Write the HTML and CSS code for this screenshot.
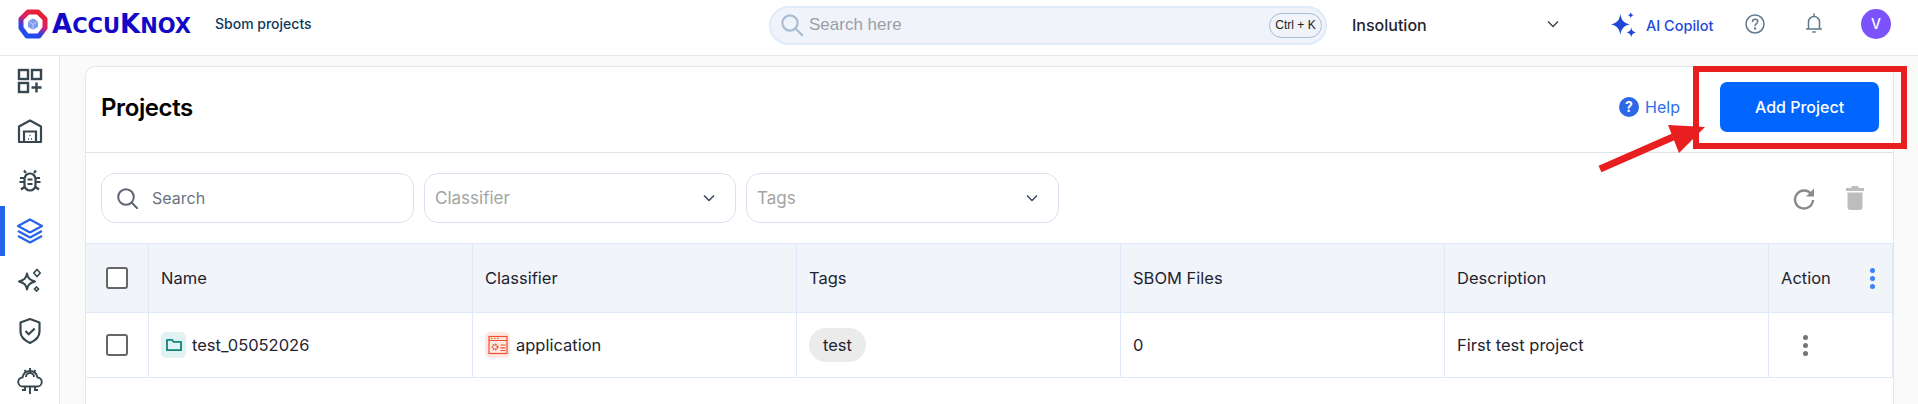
FILE: index.html
```html
<!DOCTYPE html>
<html lang="en">
<head>
<meta charset="utf-8">
<title>Projects</title>
<link rel="stylesheet" href="styles.css">
</head>
<body>
<header class="topbar">
  <div class="logo">
    <svg class="logo-mark" viewBox="0 0 30 30" width="30" height="30">
      <defs><linearGradient id="lg" x1="0.75" y1="0" x2="0.25" y2="1"><stop offset="0" stop-color="#e8202f"/><stop offset="0.45" stop-color="#d8206a"/><stop offset="0.7" stop-color="#3b3fe0"/><stop offset="1" stop-color="#1450f0"/></linearGradient></defs>
      <path d="M10 3h10l7 7v9l-6 8H9l-6-8v-9z" fill="none" stroke="url(#lg)" stroke-width="5" stroke-linejoin="round"/>
      <path d="M15 9.500l5 2.800v5.600l-5 2.800-5-2.800v-5.600z" fill="#7f9cf0"/>
      <path d="M15 15.200v5.500M10 12.300l5 2.900 5-2.900" fill="none" stroke="#fff" stroke-width=".5"/>
    </svg>
    <span class="logo-text">A<small>CCU</small>K<small>NOX</small></span>
  </div>
  <div class="page-name">Sbom projects</div>
  <div class="global-search">
    <svg width="24" height="24" viewBox="0 0 24 24" fill="none" stroke="#a9bdd3" stroke-width="2.200"><circle cx="10" cy="10" r="7.600"/><path d="M15.600 15.600l6.600 6.600" stroke-linecap="round"/></svg>
    <span class="global-placeholder">Search here</span>
    <kbd class="shortcut">Ctrl + K</kbd>
  </div>
  <div class="tenant">Insolution</div>
  <svg class="tenant-chev" width="12" height="8" viewBox="0 0 12 8" fill="none" stroke="#374151" stroke-width="1.400"><path d="M1 1.500l5 5 5-5"/></svg>
  <svg class="star" width="27" height="26" viewBox="0 0 26 25" fill="#1d49d6"><path d="M10 2c1 6 3 8.600 9 10-6 1.400-8 4-9 10-1-6-3-8.600-9-10 6-1.400 8-4 9-10z"/><path d="M20 0c.4 2 1 2.600 3 3-2 .4-2.600 1-3 3-.4-2-1-2.600-3-3 2-.4 2.600-1 3-3zM20.500 15c.6 3 1.500 4 4.500 4.700-3 .7-3.900 1.700-4.500 4.700-.6-3-1.500-4-4.500-4.700 3-.7 3.900-1.700 4.500-4.700z"/></svg>
  <span class="copilot">AI Copilot</span>
  <svg class="help-top" width="20" height="20" viewBox="0 0 20 20" fill="none" stroke="#5e7a8a" stroke-width="1.500"><circle cx="10" cy="10" r="9"/><path d="M7.500 7.600c0-3.200 5.300-3.200 5.300 0 0 2-2.700 2-2.700 4" stroke-linecap="round"/><circle cx="10.100" cy="14.600" r=".5" fill="#5e7a8a"/></svg>
  <svg class="bell" width="16" height="21" viewBox="0 0 16 21" fill="none" stroke="#5e7a8a" stroke-width="1.500"><path d="M2.500 15.500V9a5.500 5.500 0 0 1 11 0v6.500M.5 16h15M8 1v2" stroke-linecap="round"/><path d="M6.800 19h2.400" stroke-linecap="round"/></svg>
  <div class="avatar">V</div>
</header>

<div class="shell">
  <nav class="sidebar">
    <a class="nav-item"><svg width="26" height="26" viewBox="0 0 26 26" fill="none" stroke="#37474f" stroke-width="2.400"><rect x="2" y="2" width="9" height="9"/><rect x="15" y="2" width="9" height="9"/><rect x="2" y="15" width="9" height="9"/><path d="M14.500 19.500h10M19.500 14.500v10"/></svg></a>
    <a class="nav-item"><svg width="26" height="26" viewBox="0 0 26 26" fill="none" stroke="#37474f" stroke-width="2.200"><path d="M2 24V8.500L13 2.500l11 6V24z" stroke-linejoin="round"/><path d="M7 24V13.500h12V24"/><path d="M11 21h1M14 21h1M12.500 17.500h1" stroke-width="1.600"/></svg></a>
    <a class="nav-item"><svg width="24" height="24" viewBox="0 0 24 24" fill="none" stroke="#37474f" stroke-width="2.200"><rect x="6.500" y="4.500" width="11" height="17" rx="5.500"/><path d="M9.500 10.500h5M9.500 15h5M8 4l-2-2.500M16 4l2-2.500M6 9H2M18 9h4M6 13H1.500M18 13h4.500M6.500 18l-3.500 2.500M17.500 18l3.500 2.500"/></svg></a>
    <a class="nav-item active"><svg width="28" height="26" viewBox="0 0 28 26" fill="none" stroke="#2563eb" stroke-width="2.200" stroke-linejoin="round"><path d="M14 1.500l12 6.500-12 6.500L2 8z"/><path d="M2 13l12 6.500L26 13"/><path d="M2 18l12 6.500L26 18"/></svg></a>
    <a class="nav-item"><svg width="26" height="26" viewBox="0 0 26 26" fill="none" stroke="#37474f" stroke-width="2"><path d="M10 7c1 5 2.500 6.500 8 8-5.500 1.500-7 3-8 8-1-5-2.500-6.500-8-8 5.500-1.500 7-3 8-8z" transform="translate(0 -1.500)" stroke-linejoin="round"/><path d="M20 1.500l3.200 3.500-3.200 3.500-3.200-3.500zM19.500 19l2 2-2 2-2-2z" stroke-width="1.600"/></svg></a>
    <a class="nav-item"><svg width="24" height="28" viewBox="0 0 24 28" fill="none" stroke="#37474f" stroke-width="2.200"><path d="M12 2l9.500 3.500v9c0 5.500-4 9-9.500 11.500C6.500 23.500 2.500 20 2.500 14.500v-9z" stroke-linejoin="round"/><path d="M7.500 14l3.200 3.200 6-5.700"/></svg></a>
    <a class="nav-item"><svg width="26" height="29" viewBox="0 0 26 29" fill="none" stroke="#37474f" stroke-width="1.900"><path d="M6 19.500a4.500 4.500 0 0 1-.5-9c1-5 4.500-6.500 7.500-6.500s6.500 1.500 7.500 6.500a4.500 4.500 0 0 1-.5 9z" stroke-linejoin="round"/><path d="M13 19.500V27M8 19.500v3.500H5M18 19.500v3.500h3M9 10a4 4 0 0 1 8 0M13 1v3M7.500 3l2 2.500M18.500 3l-2 2.500"/></svg></a>
  </nav>

  <main class="main">
    <section class="card">
      <div class="card-head">
        <h1 class="title">Projects</h1>
        <svg class="help-icon" width="20" height="20" viewBox="0 0 20 20"><circle cx="10" cy="10" r="10" fill="#2d68e8"/><text x="10" y="14.500" text-anchor="middle" class="help-q">?</text></svg>
        <span class="help-link">Help</span>
        <button class="add-btn">Add Project</button>
      </div>

      <div class="filters">
        <label class="field field-search">
          <svg width="21" height="21" viewBox="0 0 21 21" fill="none" stroke="#5f6673" stroke-width="2"><circle cx="9" cy="9" r="7.800"/><path d="M14.800 14.800l5.400 5.400" stroke-linecap="round"/></svg>
          <span class="search-ph">Search</span>
        </label>
        <div class="field field-select field-classifier"><span class="select-ph">Classifier</span><svg width="12" height="8" viewBox="0 0 12 8" fill="none" stroke="#39435a" stroke-width="1.500"><path d="M1 1.500l5 5 5-5"/></svg></div>
        <div class="field field-select field-tags"><span class="select-ph">Tags</span><svg width="12" height="8" viewBox="0 0 12 8" fill="none" stroke="#39435a" stroke-width="1.500"><path d="M1 1.500l5 5 5-5"/></svg></div>
        <svg class="refresh" width="22" height="24" viewBox="0 0 22 24" fill="none" stroke="#8a8a8a" stroke-width="2.400"><path d="M18.500 8.500A9 9 0 1 0 20 14"/><path d="M21 2.500v8h-8z" fill="#8a8a8a" stroke="none"/></svg>
        <svg class="trash" width="18" height="24" viewBox="0 0 18 24" fill="#bdbdbd"><path d="M6 0h6l1 2h5v3H0V2h5z"/><path d="M1.500 6.500h15V21a3 3 0 0 1-3 3h-9a3 3 0 0 1-3-3z"/></svg>
      </div>

      <table class="grid">
        <colgroup><col class="c-check"><col class="c-wide"><col class="c-wide"><col class="c-wide"><col class="c-wide"><col class="c-wide"><col class="c-last"></colgroup>
        <thead>
          <tr>
            <th><span class="check"></span></th>
            <th>Name</th>
            <th>Classifier</th>
            <th>Tags</th>
            <th>SBOM Files</th>
            <th>Description</th>
            <th><div class="action-head">Action<span class="dots dots-blue"><i></i><i></i><i></i></span></div></th>
          </tr>
        </thead>
        <tbody>
          <tr>
            <td><span class="check"></span></td>
            <td><div class="with-icon"><span class="badge badge-teal"><svg width="16" height="14" viewBox="0 0 16 14" fill="none" stroke="#0f8577" stroke-width="1.800"><path d="M1 12.200V1.800h5l1.500 2H15v8.400z" stroke-linejoin="round"/></svg></span>test_05052026</div></td>
            <td><div class="with-icon"><span class="badge badge-orange"><svg width="20" height="20" viewBox="0 0 20 20" fill="none" stroke="#f0502a" stroke-width="1.200"><rect x="1" y="1.500" width="18" height="17"/><path d="M1 5.500h18M3 3.500h1.500M6 3.500h1.500M9 3.500h1.500M12.500 10h5M12.500 12.800h5M12.500 15.500h5"/><circle cx="7" cy="12" r="2.500" stroke-dasharray="1.500 .8" stroke-width="1.800"/></svg></span>application</div></td>
            <td><span class="chip">test</span></td>
            <td>0</td>
            <td>First test project</td>
            <td><span class="dots dots-gray"><i></i><i></i><i></i></span></td>
          </tr>
        </tbody>
      </table>
    </section>
  </main>
</div>

<div class="callout"></div>
<svg class="arrow" width="120" height="60" viewBox="0 0 120 60"><path d="M3 52L76 20" stroke="#e91e1e" stroke-width="7" fill="none"/><path d="M71 8L108 10 82 36z" fill="#e91e1e"/></svg>
</body>
</html>
```

FILE: styles.css
```css
* { box-sizing: border-box; }
html, body { margin: 0; padding: 0; }
body {
  width: 1918px;
  height: 404px;
  overflow: hidden;
  position: relative;
  background: #fff;
  font-family: Inter, "Liberation Sans", sans-serif;
  font-size: 16px;
  color: #1f2430;
}

/* top bar */
.topbar {
  height: 56px;
  display: flex;
  align-items: center;
  border-bottom: 1px solid #e8e8e8;
  background: #fff;
}
.logo { display: flex; align-items: center; margin-left: 18px; width: 197px; margin-top: -7px; }
.logo-mark { flex: none; }
.logo-text {
  margin-left: 4px;
  font-family: "DejaVu Sans", sans-serif;
  font-weight: 700;
  font-size: 26px;
  line-height: 1;
  color: #1408c8;
  letter-spacing: 0;
}
.logo-text small { font-size: 21px; }
.page-name { width: 97px; font-size: 14px; font-weight: 500; color: #0d3a5c; margin-top: -9px; white-space: nowrap; }
.global-search {
  width: 558px;
  height: 39px;
  margin-left: 457px;
  margin-top: -5px;
  display: flex;
  align-items: center;
  padding: 0 3px 0 9px;
  background: #f0f4fa;
  border: 2px solid #dfeafb;
  border-radius: 20px;
}
.global-placeholder { margin-left: 5px; font: 17px "Liberation Sans", sans-serif; color: #9b9ea5; }
.shortcut {
  margin-left: auto;
  width: 53px;
  height: 25px;
  border: 1px solid #a9bdd3;
  border-radius: 13px;
  font: 12px/23px "Liberation Sans", sans-serif;
  text-align: center;
  color: #222;
}
.tenant { margin-left: 25px; width: 195px; font-weight: 500; font-size: 16px; margin-top: -5px; color: #1f2430; }
.tenant-chev { margin-top: -7px; margin-left: 0; flex: none; }
.star { margin-left: 51px; margin-top: -5px; flex: none; }
.copilot { margin-left: 9px; width: 99px; font-size: 14.500px; font-weight: 500; color: #1d49d6; margin-top: -5px; white-space: nowrap; }
.help-top { flex: none; margin-top: -8px; }
.bell { flex: none; margin-left: 41px; margin-top: -8px; }
.avatar {
  margin-left: 39px;
  margin-top: -8px;
  width: 30px;
  height: 30px;
  border-radius: 50%;
  background: #7b52fb;
  color: #fff;
  font-size: 14px;
  font-weight: 500;
  line-height: 30px;
  text-align: center;
  flex: none;
}

/* shell */
.shell { display: flex; height: 348px; overflow: hidden; }
.sidebar {
  width: 60px;
  flex: none;
  overflow: hidden;
  background: #fff;
  border-right: 1px solid #e8e8e8;
}
.nav-item { height: 50px; display: flex; align-items: center; justify-content: center; padding-left: 1px; }
.nav-item.active { box-shadow: inset 5px 0 0 #2563eb; }
.main {
  flex: 1;
  padding: 10px 24px 0 25px;
  background: #fafafa;
}

/* card */
.card {
  height: 338px;
  overflow: hidden;
  background: #fff;
  border: 1px solid #e6e6e6;
  border-bottom: 0;
  border-radius: 10px 10px 0 0;
}
.card-head {
  height: 86px;
  display: flex;
  align-items: center;
  padding: 0 14px 5px 15px;
  border-bottom: 1px solid #e2e2e2;
}
.title { margin: 0 auto 0 0; font-size: 24px; font-weight: 600; color: #000; letter-spacing: -0.400px; }
.help-q { font: 700 14px Inter, sans-serif; fill: #fff; }
.help-link { margin-left: 6px; color: #2f6fe8; font-size: 16px; }
.add-btn {
  margin-left: 40px;
  width: 159px;
  height: 50px;
  border: 0;
  border-radius: 7px;
  background: #0066ff;
  color: #fff;
  font: 500 16px Inter, sans-serif;
}

/* filters */
.filters {
  height: 90px;
  display: flex;
  align-items: center;
  padding: 0 0 0 15px;
}
.field {
  height: 50px;
  display: flex;
  align-items: center;
  background: #fff;
  border: 1px solid #d9e0ee;
  border-radius: 14px;
}
.field-search { width: 313px; padding-left: 15px; }
.search-ph { margin-left: 14px; color: #6b7280; }
.field-select { justify-content: space-between; padding: 0 20px 0 10px; }
.field-classifier { width: 312px; margin-left: 10px; }
.field-tags { width: 313px; margin-left: 10px; }
.select-ph { color: #a3a3a3; font-size: 17px; }
.refresh { margin-left: 734px; flex: none; }
.trash { margin-left: 31px; flex: none; }

/* table */
.grid {
  width: 1807px;
  table-layout: fixed;
  border-collapse: separate;
  border-spacing: 0;
  background: #fff;
}
.c-check { width: 63px; }
.c-wide { width: 324px; }
.c-last { width: 124px; }
.grid th, .grid td {
  padding: 0 12px;
  font-size: 16.500px;
  font-weight: 400;
  text-align: left;
  color: #1f2430;
  border-right: 1px solid #dfe9f8;
  border-bottom: 1px solid #dfe9f8;
}
.grid th {
  height: 70px;
  background: #f1f4f9;
  border-top: 1px solid #dfe9f8;
}
.grid td { height: 65px; }
.grid th:first-child, .grid td:first-child { padding: 0 0 0 20px; }
.check {
  display: block;
  width: 22px;
  height: 22px;
  border: 2.500px solid #666;
  border-radius: 3px;
  background: #fff;
}
.action-head { display: flex; align-items: center; justify-content: space-between; padding-right: 5px; }
.dots { display: flex; flex-direction: column; gap: 3px; width: 5px; }
.dots i { display: block; width: 5px; height: 5px; border-radius: 50%; }
.dots-blue i { background: #3b82f6; }
.dots-gray { margin-left: 22px; }
.dots-gray i { background: #757575; }
.with-icon { display: flex; align-items: center; gap: 6px; }
.badge {
  width: 25px;
  height: 26px;
  border-radius: 5px;
  display: flex;
  align-items: center;
  justify-content: center;
  flex: none;
}
.badge-teal { background: #e0f2f1; }
.badge-orange { background: #fde8e3; }
.chip {
  display: inline-block;
  padding: 0 14px;
  height: 34px;
  line-height: 34px;
  border-radius: 17px;
  background: #ebebeb;
}

/* annotation drawn over the screenshot */
.callout {
  position: absolute;
  left: 1693px;
  top: 66px;
  width: 214px;
  height: 83px;
  border: 6px solid #e91e1e;
}
.arrow { position: absolute; left: 1597px; top: 117px; }
```
